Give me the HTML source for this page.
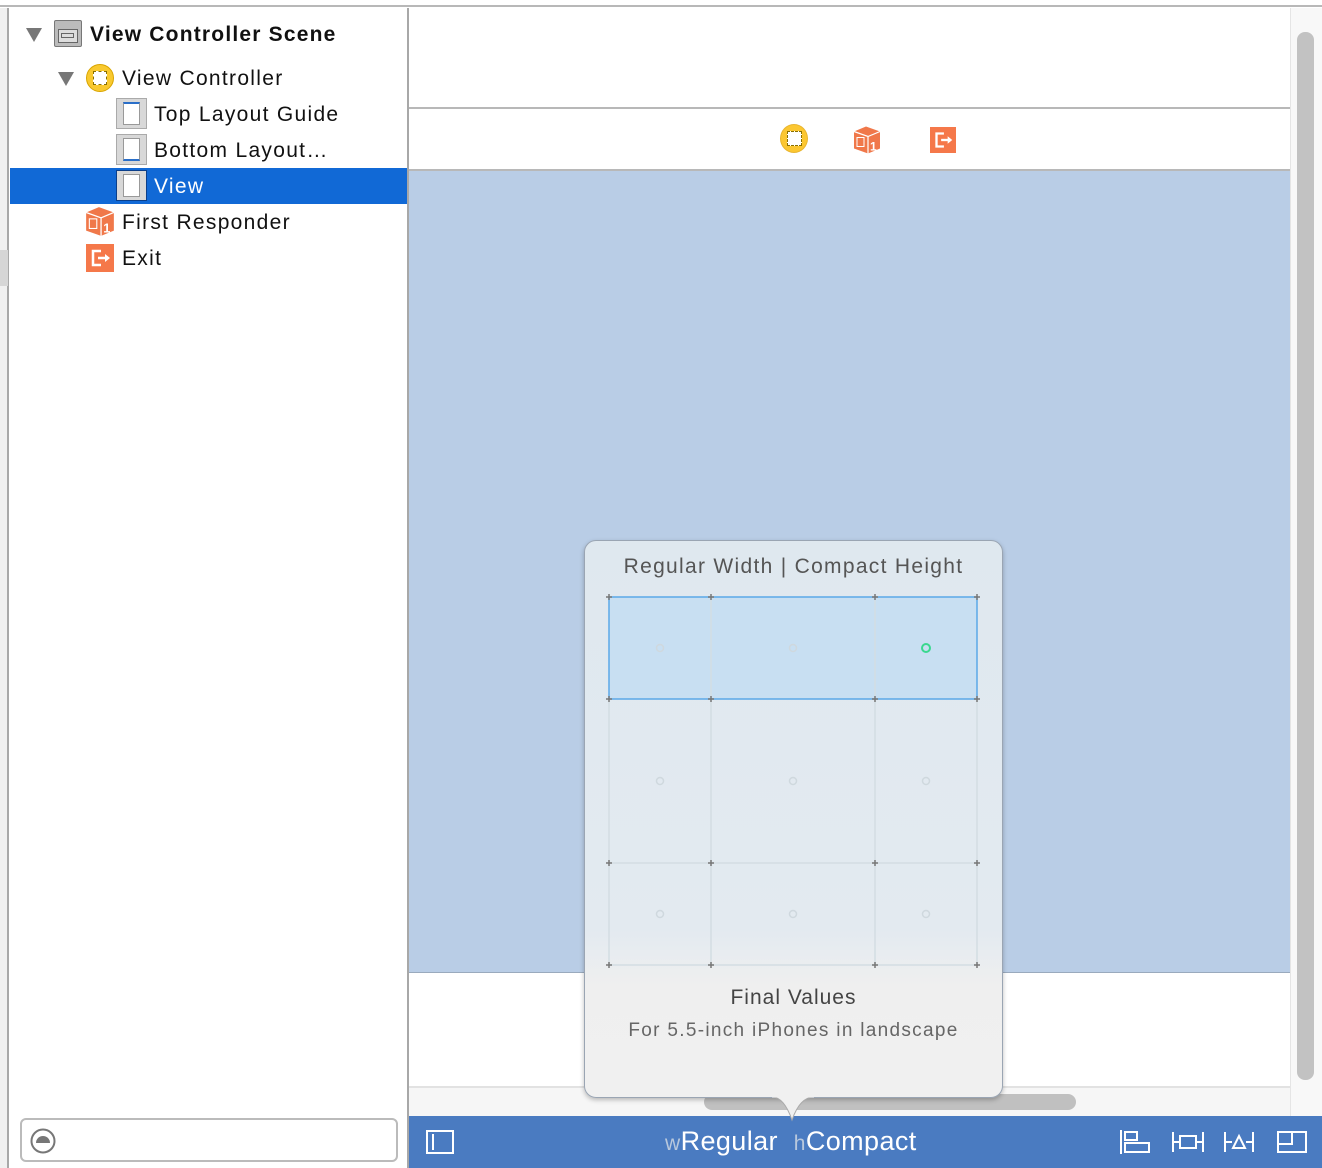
<!DOCTYPE html>
<html><head><style>
*{margin:0;padding:0;box-sizing:border-box}
body{width:1322px;height:1168px;position:relative;background:#fff;font-family:"Liberation Sans",sans-serif;overflow:hidden}
.a{position:absolute}
.row{position:absolute;font-size:21px;color:#111;white-space:nowrap;letter-spacing:1.3px}
.tri{position:absolute;width:0;height:0;border-left:8px solid transparent;border-right:8px solid transparent;border-top:14px solid #777}
.doc{position:absolute;width:31px;height:31px;background:#d8d8d8;border:1px solid #aaa}
.doc i{position:absolute;left:6px;top:3px;width:17px;height:23px;background:#fff;border:1px solid #999}
</style></head><body>
<div class="a" style="left:0;top:0;width:1322px;height:7px;background:#fff;border-bottom:2px solid #b8b8b8"></div>
<div class="a" style="left:0;top:8px;width:9px;height:1160px;background:#f0f0f0;border-right:2px solid #a8a8a8"></div>
<div class="a" style="left:0;top:250px;width:8px;height:36px;background:#d6d6d6"></div>
<div class="a" style="left:407px;top:8px;width:2px;height:1160px;background:#a8a8a8"></div>

<div class="tri" style="left:26px;top:28px"></div>
<div class="a" style="left:54px;top:20px;width:28px;height:27px;background:#bbb;border:1px solid #777;border-radius:2px"><div class="a" style="left:3px;top:8px;width:20px;height:14px;border:1px solid #666;background:#ddd"></div><div class="a" style="left:6px;top:12px;width:13px;height:5px;border:1px solid #666"></div></div>
<div class="row" style="left:90px;top:23px;font-weight:bold;letter-spacing:1.2px">View Controller Scene</div>

<div class="tri" style="left:58px;top:72px"></div>
<div class="a" style="left:86px;top:64px;width:28px;height:28px;border-radius:50%;background:#f9c92f;border:1px solid #d9a500"><div class="a" style="left:6px;top:6px;width:14px;height:14px;background:#fff;border:1px dashed #8a7000"></div></div>
<div class="row" style="left:122px;top:67px">View Controller</div>

<div class="doc" style="left:116px;top:98px"><i style="border-top:2px solid #2a6fc9"></i></div>
<div class="row" style="left:154px;top:103px">Top Layout Guide</div>
<div class="doc" style="left:116px;top:134px"><i style="border-bottom:2px solid #2a6fc9"></i></div>
<div class="row" style="left:154px;top:139px">Bottom Layout…</div>

<div class="a" style="left:10px;top:168px;width:397px;height:36px;background:#1169d6"></div>
<div class="doc" style="left:116px;top:170px;border-color:#0b3f8a"><i></i></div>
<div class="row" style="left:154px;top:175px;color:#fff">View</div>

<svg class="a" style="left:84px;top:205px" width="32" height="32" viewBox="0 0 30 30"><path d="M2 7 L14 2 L28 7 L28 24 L16 29 L2 24Z" fill="#f0784a"/><path d="M2 7 L16 12 L28 7 M16 12 L16 29" stroke="#fff" stroke-width="1.2" fill="none"/><rect x="5" y="13" width="7" height="9" fill="none" stroke="#fff"/><text x="18" y="26" font-size="12" font-weight="bold" fill="#fff" font-family="Liberation Sans">1</text></svg>
<div class="row" style="left:122px;top:211px">First Responder</div>
<svg class="a" style="left:86px;top:244px" width="28" height="28" viewBox="0 0 28 28"><rect width="28" height="28" fill="#f5784a"/><path d="M15 7 H7 V21 H15" stroke="#fff" stroke-width="2.5" fill="none"/><path d="M12 14 H20" stroke="#fff" stroke-width="2.5"/><path d="M19 10 L24 14 L19 18Z" fill="#fff"/></svg>
<div class="row" style="left:122px;top:247px">Exit</div>

<div class="a" style="left:20px;top:1118px;width:378px;height:44px;border:2px solid #bbb;border-radius:6px;background:#fff"></div>
<svg class="a" style="left:30px;top:1128px" width="26" height="26"><circle cx="13" cy="13" r="11.5" fill="none" stroke="#777" stroke-width="2"/><path d="M6 15 A7 7 0 0 1 20 15Z" fill="#777"/></svg>

<div class="a" style="left:409px;top:107px;width:881px;height:2px;background:#b8b8b8"></div>
<div class="a" style="left:409px;top:169px;width:881px;height:2px;background:#b8b8b8"></div>
<div class="a" style="left:780px;top:124px;width:28px;height:29px;border-radius:50%;background:#fcc731;border:1px solid #e8b530"><div class="a" style="left:6px;top:6px;width:15px;height:15px;background:#fff;border:1px dashed #8a7000"></div></div>
<svg class="a" style="left:852px;top:124px" width="30" height="31" viewBox="0 0 30 30"><path d="M2 7 L14 2 L28 7 L28 24 L16 29 L2 24Z" fill="#f0784a"/><path d="M2 7 L16 12 L28 7 M16 12 L16 29" stroke="#fff" stroke-width="1.2" fill="none"/><rect x="5" y="13" width="7" height="9" fill="none" stroke="#fff"/><text x="18" y="26" font-size="12" font-weight="bold" fill="#fff" font-family="Liberation Sans">1</text></svg>
<svg class="a" style="left:930px;top:126px" width="26" height="28" viewBox="0 0 28 28"><rect width="28" height="28" fill="#f5784a"/><path d="M15 7 H7 V21 H15" stroke="#fff" stroke-width="2.5" fill="none"/><path d="M12 14 H20" stroke="#fff" stroke-width="2.5"/><path d="M19 10 L24 14 L19 18Z" fill="#fff"/></svg>
<div class="a" style="left:409px;top:171px;width:881px;height:802px;background:#b9cde6;border-bottom:1px solid #9aaabd"></div>
<div class="a" style="left:409px;top:1086px;width:881px;height:30px;background:#f6f6f6;border-top:2px solid #e2e2e2"></div>
<div class="a" style="left:704px;top:1094px;width:372px;height:16px;border-radius:8px;background:#c0c0c0"></div>
<div class="a" style="left:1290px;top:8px;width:32px;height:1108px;background:#f8f8f8;border-left:1px solid #e5e5e5"></div>
<div class="a" style="left:1297px;top:32px;width:17px;height:1048px;border-radius:8px;background:#c2c2c2"></div>

<div class="a" style="left:409px;top:1116px;width:913px;height:52px;background:#4a7bc1"></div>
<div class="a" style="left:426px;top:1130px;width:28px;height:24px;border:2px solid #fff"><div class="a" style="left:4px;top:2px;width:2px;height:16px;background:#fff"></div></div>
<div class="a" style="left:665px;top:1126px;font-size:27px;color:#fff;white-space:nowrap;letter-spacing:0.4px"><span style="color:#b8c8dd;font-size:21px">w</span>Regular&nbsp; <span style="color:#b8c8dd;font-size:21px">h</span>Compact</div>
<svg class="a" style="left:1118px;top:1128px" width="190" height="28" fill="none" stroke="#fff" stroke-width="2">
<path d="M3 2 V26"/><rect x="7" y="4" width="12" height="8"/><rect x="7" y="15" width="24" height="9"/>
<path d="M55 4 V24 M85 4 V24 M55 14 H62 M78 14 H85"/><rect x="62" y="8" width="16" height="12"/>
<path d="M107 4 V24 M135 4 V24 M107 14 H114 M128 14 H135 M115 20 L121 8 L127 20Z"/>
<rect x="160" y="4" width="28" height="20"/><path d="M174 4 V16 H160"/>
</svg>

<div class="a" style="left:584px;top:540px;width:419px;height:558px;border-radius:12px;background:linear-gradient(#dfe8ef 0%,#e3eaf0 70%,#efefef 80%,#f0f0f0);border:1px solid #9aa5b3;box-shadow:0 2px 5px rgba(0,0,0,.25)"></div>
<svg class="a" style="left:772px;top:1096px" width="42" height="28"><path d="M0 1 Q12 1 20 24 Q28 1 42 1" fill="#f0f0f0" stroke="#aaa"/><path d="M0 0 H42" stroke="#f0f0f0" stroke-width="3"/></svg>
<div class="a" style="left:584px;top:555px;width:419px;text-align:center;font-size:21px;color:#555;letter-spacing:1.3px;white-space:nowrap">Regular Width | Compact Height</div>
<svg class="a" style="left:604px;top:592px" width="380" height="380">
<rect x="5" y="5" width="368" height="102" fill="#c8dff2"/>
<g stroke="#d3dde3" stroke-width="1.5" fill="none">
<path d="M5 107 V373 M107 107 V373 M271 107 V373 M373 107 V373 M5 271 H373 M5 373 H373"/>
<path d="M107 5 V107 M271 5 V107"/></g>
<rect x="5" y="5" width="368" height="102" fill="none" stroke="#5aa8e8" stroke-width="1.5"/>
<g stroke="#777" stroke-width="1.5">
<path d="M5 2 V8 M2 5 H8 M107 2 V8 M104 5 H110 M271 2 V8 M268 5 H274 M373 2 V8 M370 5 H376"/>
<path d="M5 104 V110 M2 107 H8 M107 104 V110 M104 107 H110 M271 104 V110 M268 107 H274 M373 104 V110 M370 107 H376"/>
<path d="M5 268 V274 M2 271 H8 M107 268 V274 M104 271 H110 M271 268 V274 M268 271 H274 M373 268 V274 M370 271 H376"/>
<path d="M5 370 V376 M2 373 H8 M107 370 V376 M104 373 H110 M271 370 V376 M268 373 H274 M373 370 V376 M370 373 H376"/></g>
<g fill="none" stroke="#cfd8de" stroke-width="1.5">
<circle cx="56" cy="56" r="3.5"/><circle cx="189" cy="56" r="3.5"/>
<circle cx="56" cy="189" r="3.5"/><circle cx="189" cy="189" r="3.5"/><circle cx="322" cy="189" r="3.5"/>
<circle cx="56" cy="322" r="3.5"/><circle cx="189" cy="322" r="3.5"/><circle cx="322" cy="322" r="3.5"/></g>
<circle cx="322" cy="56" r="4" fill="none" stroke="#3ad88f" stroke-width="2"/>
</svg>
<div class="a" style="left:584px;top:986px;width:419px;text-align:center;font-size:21px;color:#444;letter-spacing:1px">Final Values</div>
<div class="a" style="left:584px;top:1020px;width:419px;text-align:center;font-size:19px;color:#666;letter-spacing:1.3px;white-space:nowrap">For 5.5-inch iPhones in landscape</div>
</body></html>
